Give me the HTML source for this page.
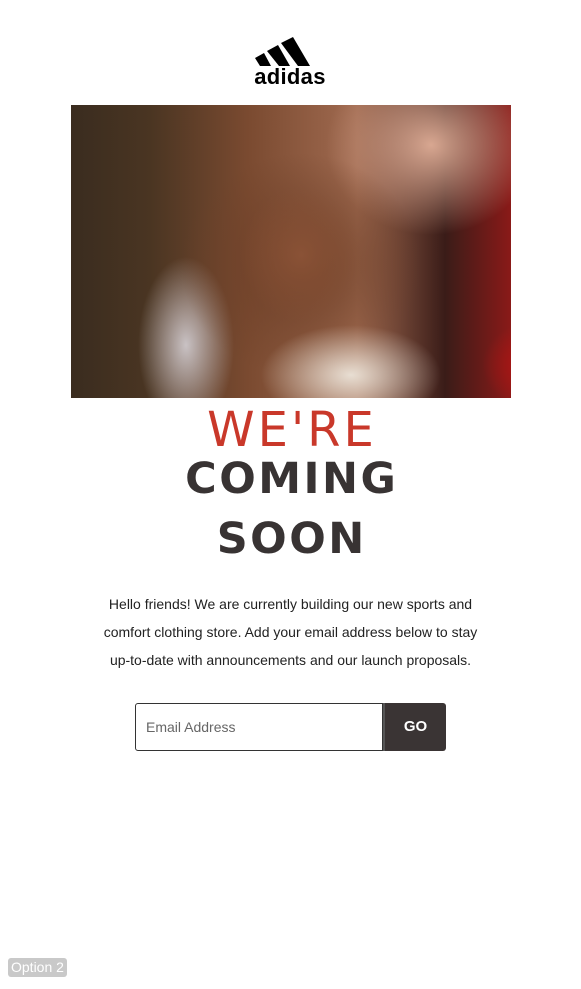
<!DOCTYPE html>
<html><head><style>
body{margin:0;width:581px;height:989px;background:#fff;font-family:"DejaVu Sans","Liberation Sans",sans-serif;position:relative;overflow:hidden}
.img{position:absolute;left:71px;top:105px;width:440px;height:293px;overflow:hidden;
background:
radial-gradient(ellipse 90px 50px at 280px 270px,rgba(240,235,225,.9),transparent),
radial-gradient(ellipse 70px 60px at 460px 260px,rgba(180,20,20,.95),transparent 70%),
radial-gradient(ellipse 80px 90px at 230px 150px,#8a5236,transparent 75%),
radial-gradient(ellipse 150px 140px at 230px 160px,#6e4028,transparent 80%),
radial-gradient(ellipse 140px 120px at 360px 40px,#d8a791,transparent 75%),
radial-gradient(ellipse 60px 110px at 115px 240px,#c9c2c4,transparent 80%),
linear-gradient(90deg,#3a2c1f 0%,#4a3522 18%,#7a4a30 40%,#a06a50 65%,#3a1c18 85%,#8a1a18 100%)}
.h{position:absolute;left:0;width:581px;text-align:center;margin:0}
.w{top:402px;font-size:48px;color:#c9382a;letter-spacing:3px;text-indent:3px;font-weight:normal}
.c{font-size:43px;font-weight:bold;color:#383333;letter-spacing:2.5px;text-indent:2.5px}
p{position:absolute;top:590px;left:0;width:581px;text-align:center;font-size:14px;line-height:28px;color:#222;margin:0;font-family:"Liberation Sans",sans-serif}
.in{position:absolute;left:135px;top:703px;height:48px;border:1px solid #333;border-radius:3px 0 0 3px;font-family:"Liberation Sans",sans-serif;font-size:14px;color:#666;line-height:46px;padding-left:10px;box-sizing:border-box;width:248px}
.go{position:absolute;left:383px;top:703px;width:63px;height:48px;background:#3a3434;border-radius:0 3px 3px 0;color:#fff;font-family:"Liberation Sans",sans-serif;font-size:15px;font-weight:bold;line-height:48px;text-align:center;border-left:2px solid #555;box-sizing:border-box}
.op{position:absolute;left:8px;top:958px;background:#c9c9c9;color:#fff;font-size:14px;padding:1px 3px 2px;border-radius:3px;font-family:"Liberation Sans",sans-serif}
</style></head><body>
<svg style="position:absolute;left:252px;top:36px" width="78" height="52" viewBox="0 0 78 52">
<polygon points="3,22 12,17 19,30 8,30" fill="#000"/>
<polygon points="15,15 26,9 38,30 27,30" fill="#000"/>
<polygon points="29,7 41,1 58,30 46,30" fill="#000"/>
<text x="38" y="48" text-anchor="middle" font-family="Liberation Sans" font-weight="bold" font-size="22" fill="#000" letter-spacing="0.3">adidas</text>
</svg>
<div class="img"></div>
<div class="h w">WE'RE</div>
<div class="h c" style="top:454px">COMING</div>
<div class="h c" style="top:514px">SOON</div>
<p>Hello friends! We are currently building our new sports and<br>comfort clothing store. Add your email address below to stay<br>up-to-date with announcements and our launch proposals.</p>
<div class="in">Email Address</div>
<div class="go">GO</div>
<div class="op">Option 2</div>
</body></html>
